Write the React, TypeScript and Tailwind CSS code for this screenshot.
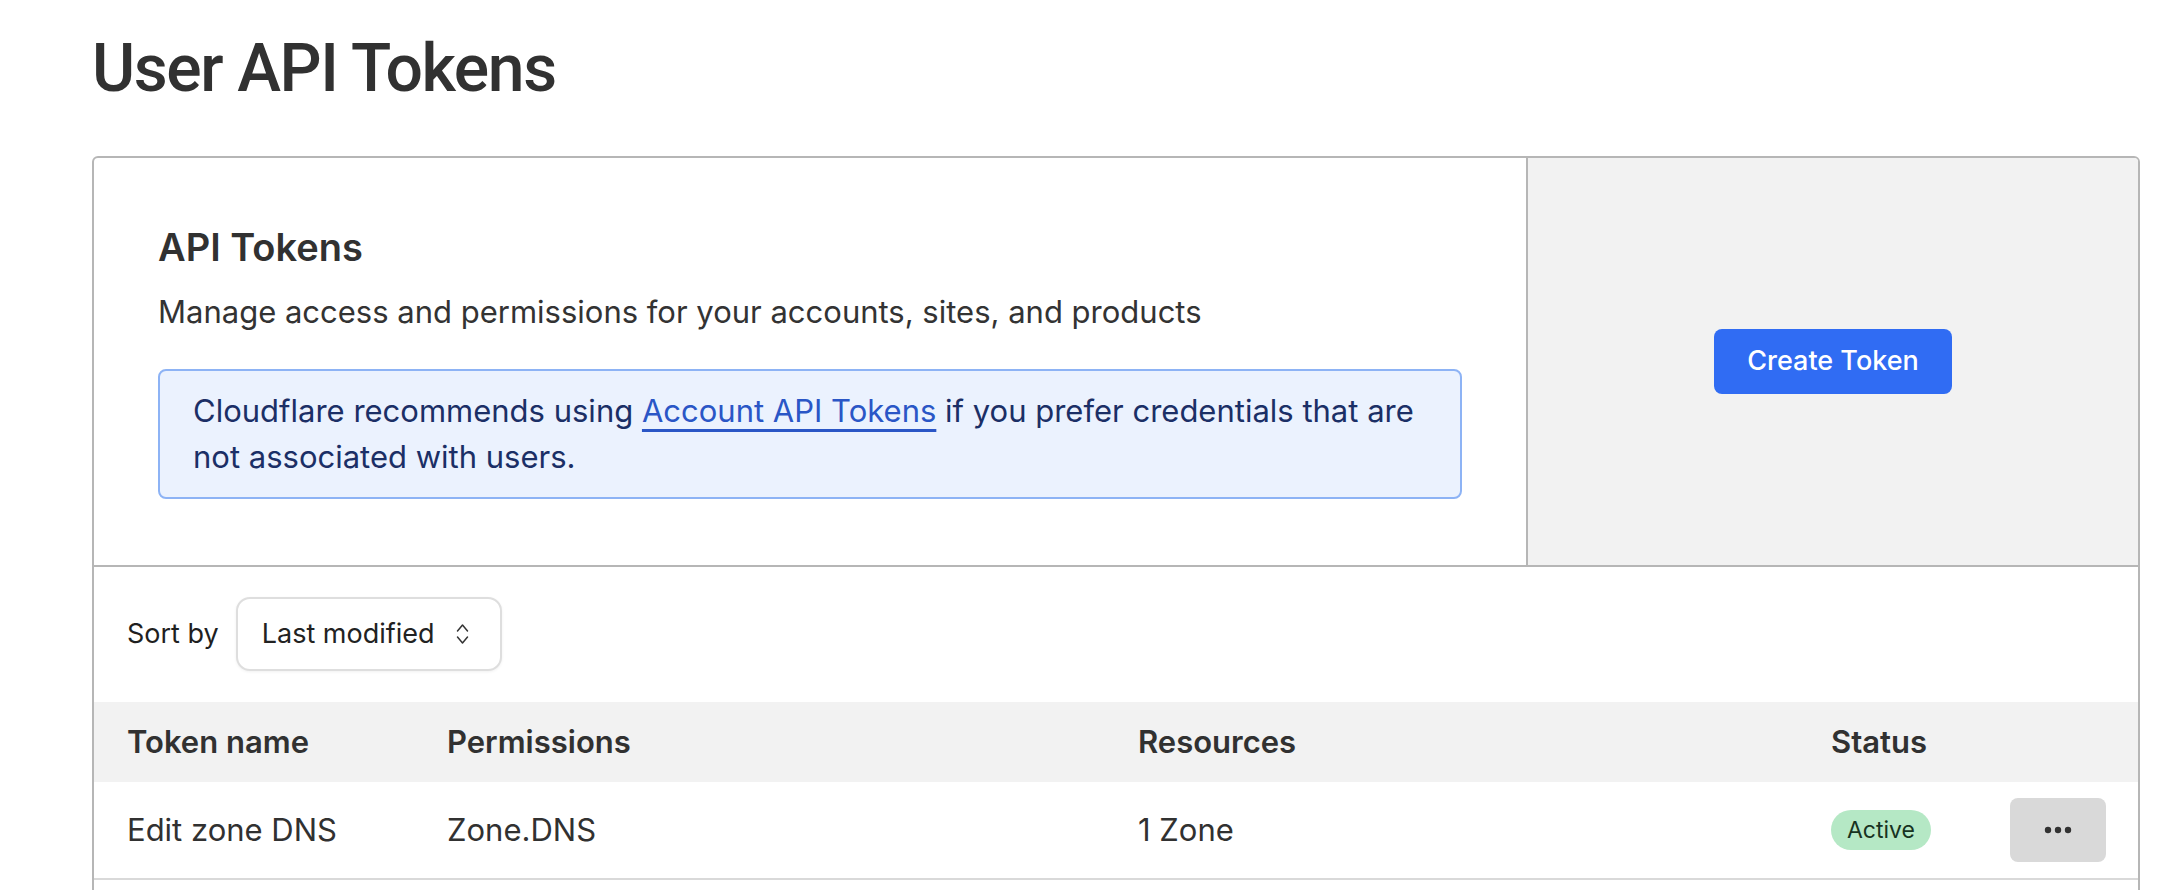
import React from "react";

function ChevronsUpDown() {
  return (
    <svg width="13" height="22" viewBox="0 0 13 22" fill="none" stroke="#333333" strokeWidth="1.5" strokeLinecap="round" strokeLinejoin="round">
      <path d="M1.5 8 L6.5 2 L11.5 8" />
      <path d="M1.5 14 L6.5 20 L11.5 14" />
    </svg>
  );
}

function Dots() {
  return (
    <svg width="28" height="8" viewBox="0 0 28 8" fill="#333333">
      <circle cx="4" cy="4" r="3.2" />
      <circle cx="14" cy="4" r="3.2" />
      <circle cx="24" cy="4" r="3.2" />
    </svg>
  );
}

const cols = "grid grid-cols-[320px_691px_693px_1fr_160px]";

export default function App() {
  return (
    <div className="min-h-screen bg-white pl-[92px] pr-[42px] pt-[36px] font-['Inter',sans-serif] text-[#313131]">
      <h1 className="font-['Roboto','Liberation_Sans',Arial,sans-serif] text-[66px] font-medium leading-[66px] tracking-[-1.4px] text-[#313131]">
        User API Tokens
      </h1>

      <div className="mt-[54px] overflow-hidden rounded-[6px] border-2 border-[#b6b6b6]">
        {/* intro + create action */}
        <div className="flex border-b-2 border-[#b6b6b6]">
          <div className="flex-1 px-[64px] pt-[65px] pb-[66px]">
            <h2 className="text-[38px] font-semibold leading-[48px] text-[#313131]">API Tokens</h2>
            <p className="mt-[18px] text-[31px] leading-[46px] text-[#333333]">
              Manage access and permissions for your accounts, sites, and products
            </p>
            <div className="mt-[34px] rounded-[8px] border-2 border-[#8db3f5] bg-[#ebf2fe] px-[33px] py-[17px] text-[31px] leading-[46px] text-[#1b2f66]">
              <span>Cloudflare recommends using </span>
              <a href="#" className="text-[#2a56c6] underline decoration-[3px] underline-offset-[7px]">
                Account API Tokens
              </a>
              <span> if you prefer credentials that are</span>
              <br />
              <span>not associated with users.</span>
            </div>
          </div>
          <div className="flex w-[612px] shrink-0 items-center justify-center border-l-2 border-[#b6b6b6] bg-[#f2f2f2]">
            <button className="h-[65px] rounded-[8px] bg-[#306cf3] px-[33px] text-[27px] font-medium text-white">
              Create Token
            </button>
          </div>
        </div>

        {/* sort control */}
        <div className="flex items-center gap-[17px] px-[33px] pt-[30px] pb-[31px]">
          <span className="text-[27px] text-[#1f1f1f]">Sort by</span>
          <button className="flex h-[74px] w-[266px] items-center justify-between rounded-[14px] border-2 border-[#dedede] bg-white pl-[24px] pr-[31px] text-[27px] text-[#222222] shadow-[0_1px_3px_rgba(0,0,0,0.06)]">
            <span>Last modified</span>
            <ChevronsUpDown />
          </button>
        </div>

        {/* table */}
        <div className={`${cols} h-[80px] items-center bg-[#f2f2f2] text-[31px] font-semibold text-[#313131]`}>
          <div className="px-[33px]">Token name</div>
          <div className="px-[33px]">Permissions</div>
          <div className="px-[33px]">Resources</div>
          <div className="px-[33px]">Status</div>
          <div />
        </div>
        <div className={`${cols} h-[98px] items-center border-b-2 border-[#d9d9d9] text-[31px] text-[#313131]`}>
          <div className="px-[33px]">Edit zone DNS</div>
          <div className="px-[33px]">Zone.DNS</div>
          <div className="px-[33px]">1 Zone</div>
          <div className="flex items-center px-[33px]">
            <span className="flex h-[40px] items-center rounded-[20px] bg-[#b5e8c5] px-[16px] text-[23px] leading-none text-[#17331f]">
              Active
            </span>
          </div>
          <div className="flex justify-end pr-[32px]">
            <button className="flex h-[64px] w-[96px] items-center justify-center rounded-[8px] bg-[#d9d9d9]">
              <Dots />
            </button>
          </div>
        </div>
        <div className="h-[60px]" />
      </div>
    </div>
  );
}
